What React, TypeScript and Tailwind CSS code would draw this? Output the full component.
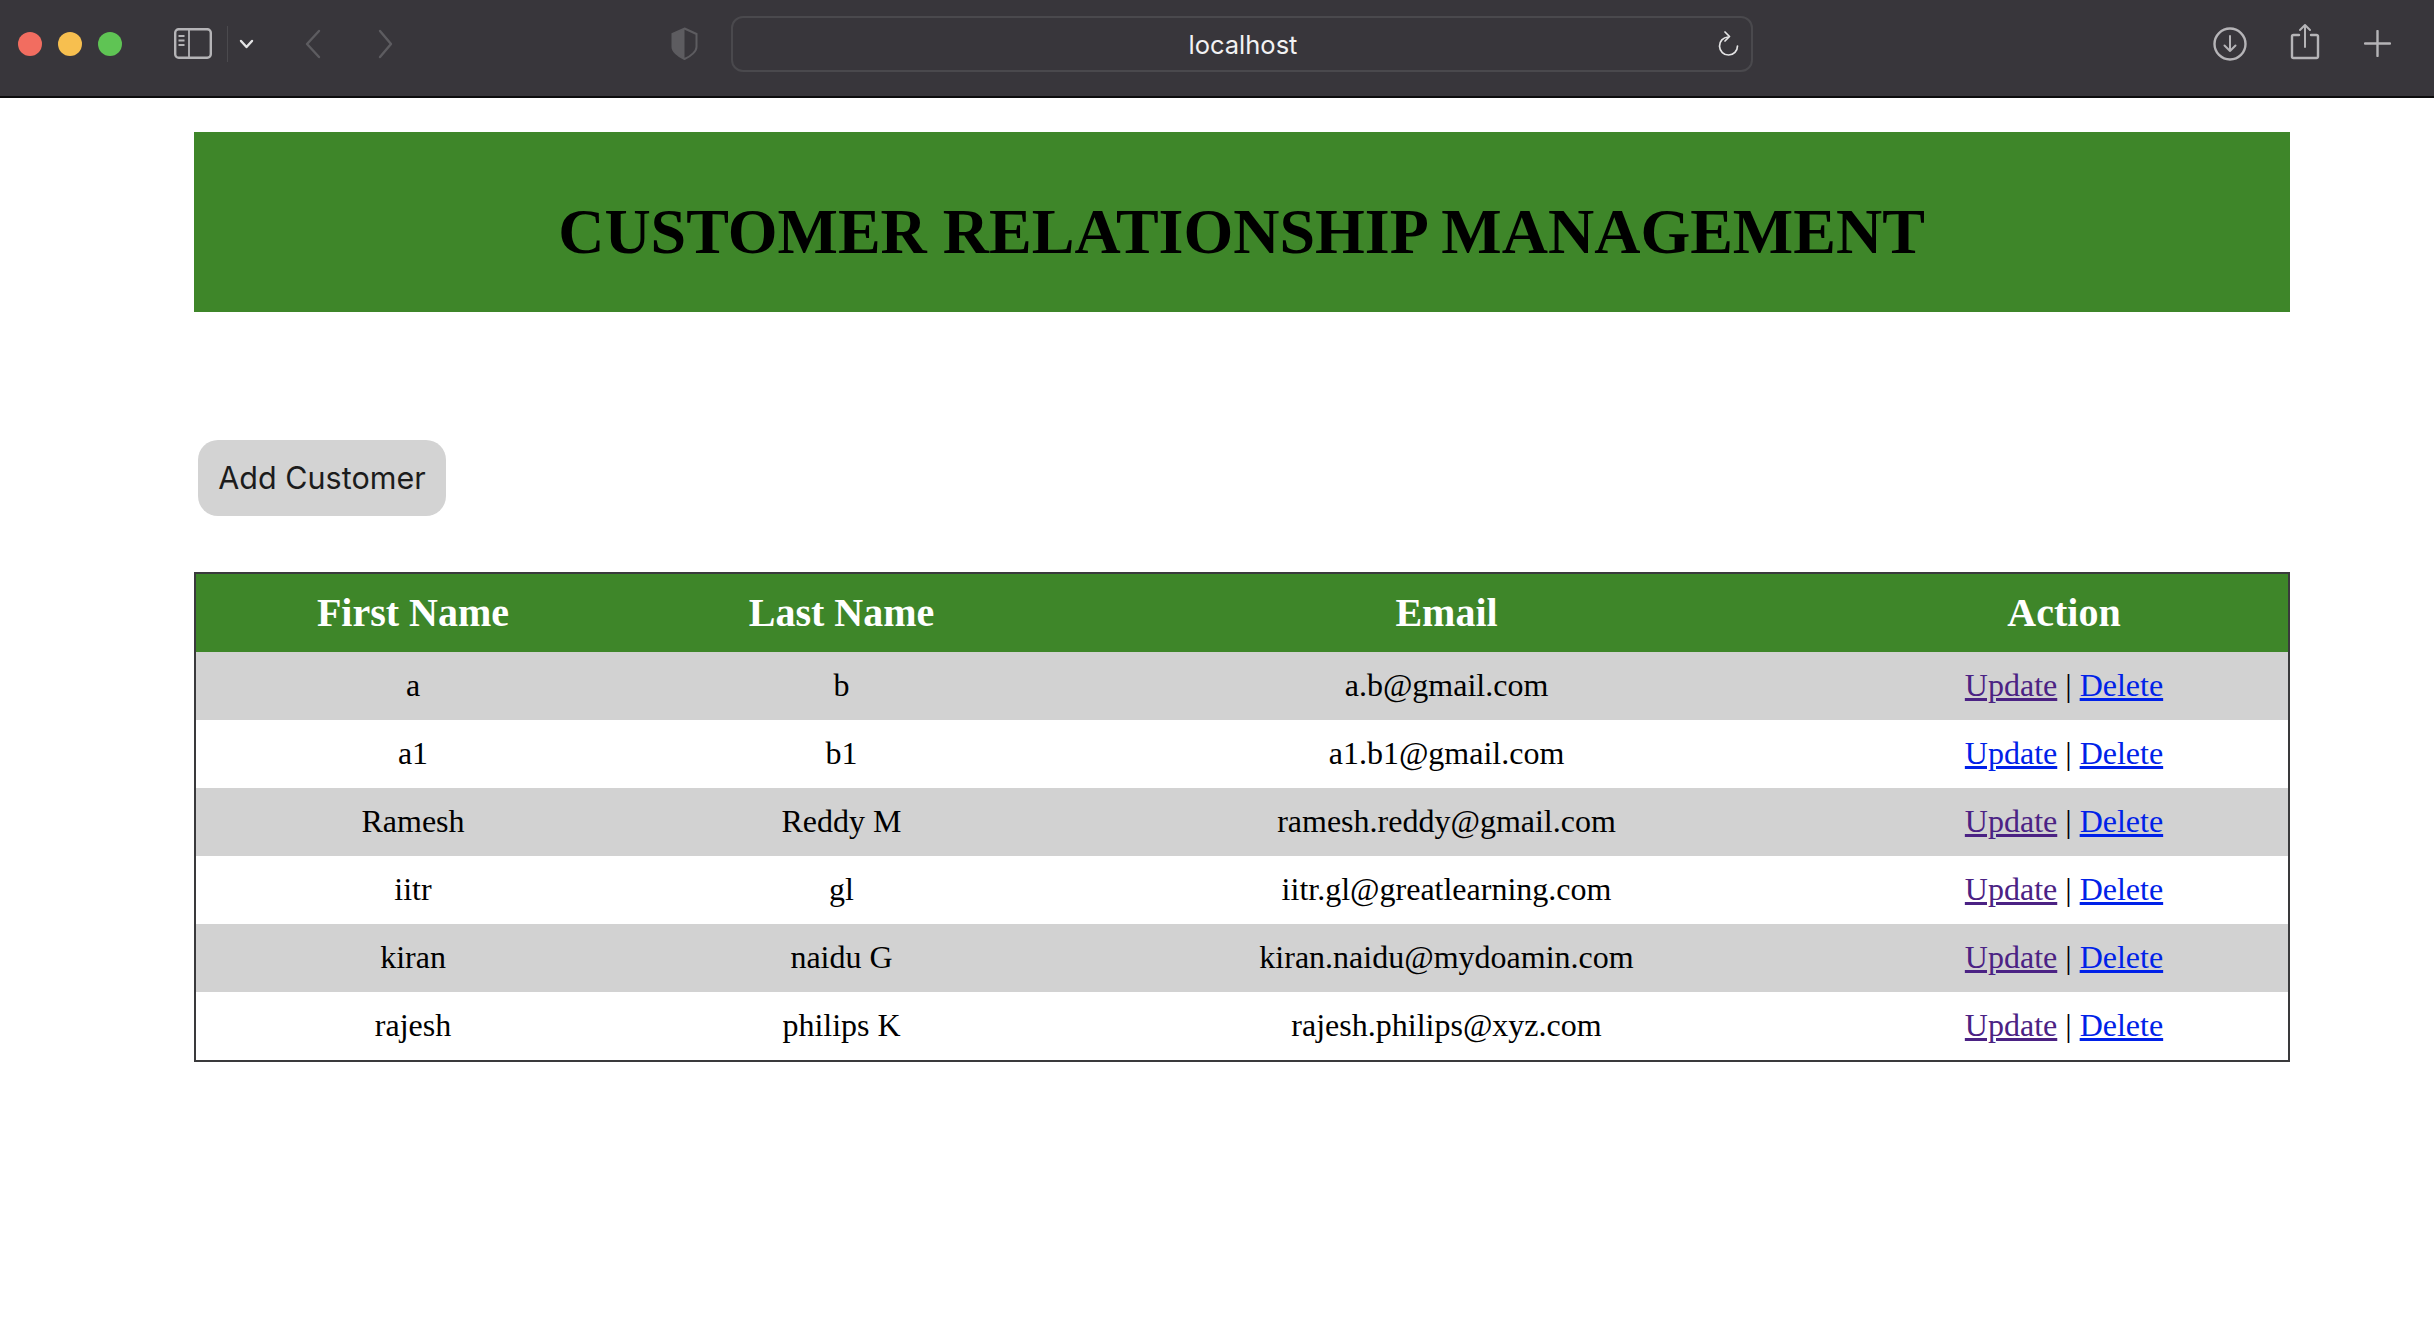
const rows = [
  { first: "a", last: "b", email: "a.b@gmail.com", visited: true },
  { first: "a1", last: "b1", email: "a1.b1@gmail.com", visited: false },
  { first: "Ramesh", last: "Reddy M", email: "ramesh.reddy@gmail.com", visited: true },
  { first: "iitr", last: "gl", email: "iitr.gl@greatlearning.com", visited: true },
  { first: "kiran", last: "naidu G", email: "kiran.naidu@mydoamin.com", visited: true },
  { first: "rajesh", last: "philips K", email: "rajesh.philips@xyz.com", visited: true },
];

function Toolbar() {
  return (
    <div className="flex h-[98px] items-start justify-between border-b-2 border-[#0c0c0d] bg-[#38363b]">
      <div className="flex h-[87px] items-center">
        <div className="ml-[18px] flex gap-[16px]">
          <span className="h-[24px] w-[24px] rounded-full bg-[#f26d60]" />
          <span className="h-[24px] w-[24px] rounded-full bg-[#f7bf4f]" />
          <span className="h-[24px] w-[24px] rounded-full bg-[#5fc454]" />
        </div>
        {/* sidebar toggle */}
        <svg className="ml-[52px] h-[31px] w-[38px]" viewBox="0 0 38 31" fill="none" stroke="#b5b4b7" strokeWidth="2.400">
          <rect x="1.200" y="1.200" width="35.600" height="28.600" rx="3.500" />
          <path d="M15 1.200v28.600" strokeWidth="1.800" />
          <path d="M4.500 8h6M4.500 12.500h6M4.500 17h6" strokeWidth="1.800" />
        </svg>
        <span className="ml-[15px] h-[36px] w-px bg-[#4b4a4e]" />
        <svg className="ml-[11px] h-[10px] w-[15px]" viewBox="0 0 15 10" fill="none" stroke="#e4e4e5" strokeWidth="2.400" strokeLinecap="round" strokeLinejoin="round">
          <path d="M2 2l5.500 6L13 2" />
        </svg>
        <svg className="ml-[51px] h-[30px] w-[16px]" viewBox="0 0 16 30" fill="none" stroke="#5d5c60" strokeWidth="2.400" strokeLinecap="round" strokeLinejoin="round">
          <path d="M14 2 2 15l12 13" />
        </svg>
        <svg className="ml-[57px] h-[30px] w-[15px]" viewBox="0 0 15 30" fill="none" stroke="#5d5c60" strokeWidth="2.400" strokeLinecap="round" strokeLinejoin="round">
          <path d="M2 2l11 13L2 28" />
        </svg>
        <svg className="ml-[278px] h-[33px] w-[27px]" viewBox="0 0 27 33" fill="none">
          <path d="M13.500 1.500 25.500 7v13c0 4-5 9-12 12C6.500 29 1.500 24 1.500 20V7Z" stroke="#5d5c60" strokeWidth="2" />
          <path d="M13.500 1.500 1.500 7v13c0 4 5 9 12 12Z" fill="#5d5c60" />
        </svg>
        <div className="relative ml-[33px] flex h-[56px] w-[1022px] items-center justify-center rounded-[12px] border-2 border-[#4a494d] pl-[2px] pt-[3px] font-['Inter',sans-serif] text-[25.500px] text-[#f2f2f3]">
          localhost
          {/* reload */}
          <svg className="absolute right-[12px] top-[13px] h-[25px] w-[22px]" viewBox="0 0 22 25" fill="none" stroke="#e4e4e5" strokeWidth="1.700" strokeLinecap="round" strokeLinejoin="round">
            <path d="M11 6a9 9 0 1 0 9.500 9" />
            <path d="M8 1l4.500 4.500L8 10" />
          </svg>
        </div>
      </div>
      <div className="flex h-[87px] items-center">
        <svg className="h-[34px] w-[34px]" viewBox="0 0 34 34" fill="none" stroke="#b5b4b7" strokeWidth="2.400" strokeLinecap="round" strokeLinejoin="round">
          <circle cx="17" cy="17" r="15.500" />
          <path d="M17 9v15M11.500 18.500 17 24l5.500-5.500" strokeWidth="2" />
        </svg>
        <svg className="-mt-[4px] ml-[43px] h-[37px] w-[30px]" viewBox="0 0 30 37" fill="none" stroke="#b5b4b7" strokeWidth="2.400" strokeLinecap="round" strokeLinejoin="round">
          <path d="M9 12H3.500A1.500 1.500 0 0 0 2 13.500v20A1.500 1.500 0 0 0 3.500 35h23a1.500 1.500 0 0 0 1.500-1.500v-20a1.500 1.500 0 0 0-1.500-1.500H21" />
          <path d="M15 24V2M10 7l5-5 5 5" strokeWidth="2" />
        </svg>
        <svg className="ml-[44px] mr-[43px] h-[27px] w-[27px]" viewBox="0 0 27 27" fill="none" stroke="#b5b4b7" strokeWidth="2.400" strokeLinecap="round">
          <path d="M13.500 1v25M1 13.500h25" />
        </svg>
      </div>
    </div>
  );
}

export default function App() {
  return (
    <div className="min-h-[1340px] bg-white font-['Liberation_Serif',serif] text-black">
      <Toolbar />
      <div className="pl-[194px] pr-[144px] pt-[34px]">
        <div className="flex h-[180px] items-center justify-center bg-[#3e8629] pr-[1px] pt-[20px]">
          <h1 className="text-[64px] font-bold">CUSTOMER RELATIONSHIP MANAGEMENT</h1>
        </div>
        <button className="ml-[4px] mt-[128px] block h-[76px] w-[248px] rounded-[20px] bg-[#d3d3d3] font-['Inter',sans-serif] text-[30.500px] text-[#1c1c1c]">
          Add Customer
        </button>
        <table className="mt-[56px] w-[2096px] table-fixed border-separate border-spacing-0 border-2 border-[#3a3a3c] text-center text-[32px]">
          <thead>
            <tr className="h-[78px] bg-[#3e8629] text-[40px] font-bold text-white">
              <th className="w-[434px]">First Name</th>
              <th className="w-[423px]">Last Name</th>
              <th className="w-[787px]">Email</th>
              <th>Action</th>
            </tr>
          </thead>
          <tbody>
            {rows.map((r, i) => (
              <tr key={r.email} className={i % 2 === 0 ? "h-[68px] bg-[#d2d2d2]" : "h-[68px] bg-white"}>
                <td className="pb-[2px]">{r.first}</td>
                <td className="pb-[2px]">{r.last}</td>
                <td className="pb-[2px]">{r.email}</td>
                <td className="pb-[2px]">
                  <a href="#" className={r.visited ? "text-[#4b2284] underline" : "text-[#0021e8] underline"}>Update</a>
                  {" | "}
                  <a href="#" className="text-[#0021e8] underline">Delete</a>
                </td>
              </tr>
            ))}
          </tbody>
        </table>
      </div>
    </div>
  );
}
